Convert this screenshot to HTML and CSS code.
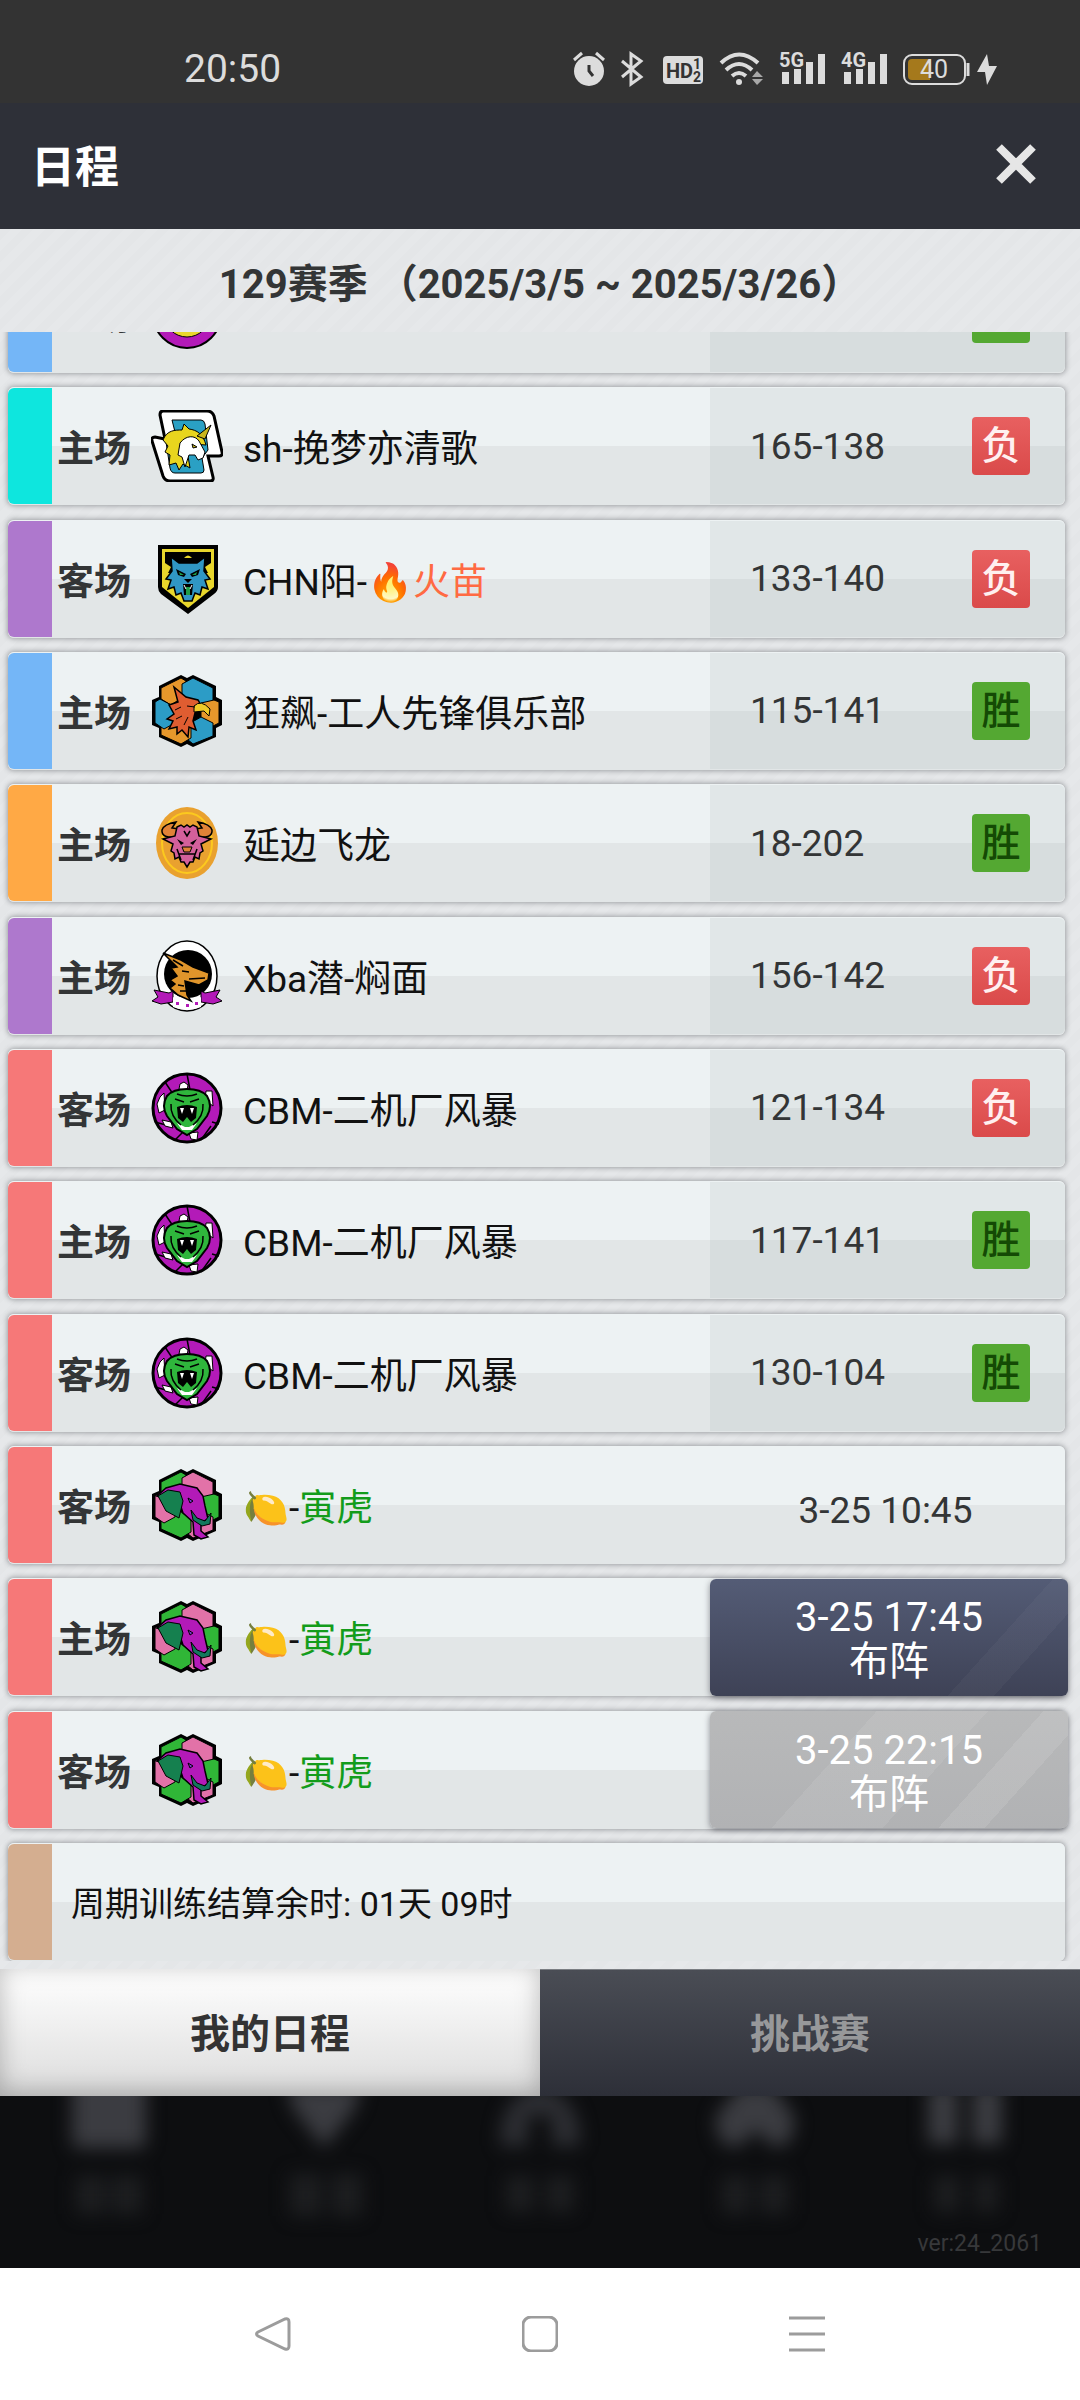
FILE: index.html
```html
<!DOCTYPE html>
<html lang="zh-CN">
<head>
  <meta charset="UTF-8">
  <meta name="viewport" content="width=device-width, initial-scale=1.0">
  <title>日程</title>
  <link rel="stylesheet" href="styles.css">
</head>
<body>
  <!-- 队徽 -->
  <svg class="defs" aria-hidden="true">
    <symbol id="unicorn" viewBox="0 0 72 72">
      <path d="M12 1H56Q61 1 63 6L71 42Q72 46 68 46L57 46L62 67Q63 71 59 71H19Q14 71 12 66L1 31Q0 27 4 27L14 29L9 5Q9 1 12 1Z" fill="#fff" stroke="#000" stroke-width="3"/>
      <path d="M21 10H50Q53 10 54 14L57 40L51 48L53 60Q53 63 50 63H24Q20 63 19 58L15 32L25 26Z" fill="#2aa0c4" stroke="#000"/>
      <path d="M12 30C16 20 24 20 31 20L33 14L38 19C46 20 52 24 55 35L42 34L37 46L39 58L32 54L28 60L25 53L18 55L19 45L14 42L17 36Z" fill="#e8d51e" stroke="#000"/>
      <path d="M29 33C35 25 44 25 48 31L54 42L52 48L47 50L44 45L38 45L34 57L31 47L27 45Z" fill="#fff" stroke="#000"/>
      <path d="M46 26L60 15L54 29ZM41 34L46 37L42 38Z" fill="#c9b61c" stroke="#000"/>
    </symbol>
    <symbol id="wolf" viewBox="0 0 72 72">
      <path d="M7 2H67V44Q67 48 63 51L37 71L10 51Q7 48 7 44Z"/>
      <path d="M11 6H63V44L37 65L11 44Z" fill="#e8d62c"/>
      <path d="M14 9H60V20L54 24L57 30H17L20 24L14 20Z"/>
      <path d="M33 15Q37 10 41 15Z" fill="#e8d62c"/>
      <path d="M20 14L28 20H46L54 14L53 28L59 36L54 37L57 46L51 44L49 52L44 50L41 58H33L30 50L25 52L23 44L17 46L20 37L15 36L21 28Z" fill="#3096c4" stroke="#000" stroke-width="1.5"/>
      <path d="M25 26L35 31L33 34L27 32ZM49 26L39 31L41 34L47 32ZM33 36H41L37 40ZM32 41H42L41 52H33Z"/>
      <path d="M28 29L33 32H29ZM46 29L41 32H45ZM35 44H39V52H35Z" fill="#1f9d48"/>
      <path d="M33 42L35 46M41 42L39 46" stroke="#fff"/>
    </symbol>
    <symbol id="hex" viewBox="0 0 72 72">
      <path d="M30 0L36 3L42 0L65 11V22L71 25V50L65 53V62L42 72L36 69L30 72L8 62V53L1 50V25L8 22V11Z"/>
      <g stroke="#000">
        <path d="M30 3L35 6V20L20 30L10 24V13Z" fill="var(--cell-a)"/>
        <path d="M42 3L62 13V26L50 34L31 20V9Z" fill="var(--cell-b)"/>
        <path d="M63 25L68 27V48L60 52L50 44V28Z" fill="var(--cell-a)"/>
        <path d="M62 61L42 69L36 64V50L50 42L62 48Z" fill="var(--cell-b)"/>
        <path d="M30 69L10 60V52L26 40L40 50V63Z" fill="var(--cell-a)"/>
        <path d="M4 27L9 24L24 32V48L13 54L4 48Z" fill="var(--cell-b)"/>
      </g>
    </symbol>
    <symbol id="eagle" viewBox="0 0 72 72">
      <use href="#hex"/>
      <path d="M23 12L35 22L47 25L51 32L44 38L42 46L45 55L38 52L37 62L31 55L26 59V52L18 54L22 46L16 44L23 39L18 30L27 27Z" fill="#df5d31" stroke="#000" stroke-width="1.5"/>
      <path d="M43 31Q50 24 59 34L58 41L53 36L43 37Z" fill="#f0cb28" stroke="#000"/>
      <path d="M24 35L30 32M25 44L31 41M33 50L37 42M36 31L44 32" stroke="#000" fill="none"/>
    </symbol>
    <symbol id="elephant" viewBox="0 0 72 72">
      <use href="#hex"/>
      <path d="M6 27L15 19L29 15L46 19L52 27L54 37L57 50L50 54V62L57 68L50 70L43 66L42 53L32 44L28 32Z" fill="#b31ab8" stroke="#000" stroke-width="1.5"/>
      <path d="M7 27L17 21L29 23L32 32L28 49L15 42Z" fill="#15804f" stroke="#000"/>
      <path d="M40 41L46 49L54 52L60 44L59 55L51 57L42 51Z" fill="#12785c" stroke="#000"/>
      <path d="M37 29L42 32L39 34Z" fill="#7a3ad0" stroke="#000"/>
    </symbol>
    <symbol id="bull" viewBox="0 0 72 72">
      <ellipse cx="36" cy="36" rx="31" ry="36" fill="#e9a12f"/>
      <ellipse cx="36" cy="36" rx="25" ry="30" fill="none" stroke="#fcc91e" stroke-width="2"/>
      <path d="M27 30Q10 32 11 23Q13 17 25 15L21 21L28 22ZM45 30Q62 32 61 23Q59 17 47 15L51 21L44 22Z" fill="#e08237" stroke="#000" stroke-width="1.5"/>
      <path d="M26 20L30 18L33 20L36 18L39 20L42 18L46 20L48 29L60 32L50 37L52 44L49 46L48 52L44 50L42 55L39 55L36 60L33 55L30 55L28 50L24 52L23 46L20 44L22 37L12 32L24 29Z" fill="#d3609b" stroke="#000" stroke-width="1.5"/>
      <path d="M26 32L33 36L30 38ZM46 32L39 36L42 38Z"/>
      <path d="M28 47H44M30 53L26 42M42 53L46 42M33 24L36 29L39 24" stroke="#000" stroke-width="1.5" fill="none"/>
      <path d="M31 40H41L39 45H33Z" fill="#e08237" stroke="#000"/>
    </symbol>
    <symbol id="dragon" viewBox="0 0 72 72">
      <ellipse cx="36" cy="36" rx="30" ry="35" fill="#fff" stroke="#000" stroke-width="1.5"/>
      <circle cx="37" cy="34" r="24"/>
      <path d="M1 61L7 57L3 50L18 53L22 51V62L10 64ZM71 61L65 57L69 50L54 53L50 51V62L62 64Z" fill="#b31ab8" stroke="#000"/>
      <path d="M22 57Q36 65 50 57V67Q36 73 22 67Z" fill="#fff"/>
      <path d="M12 13L30 20L42 27L58 33L57 40L48 45L34 41L36 55L40 61L27 55L19 48L24 44L19 40L26 36L20 28L26 27Z" fill="#e0952b" stroke="#000" stroke-width="1.5"/>
      <path d="M31 31L38 32M38 39L54 38M27 45L33 46M29 51L35 51M22 20L32 26" stroke="#000" stroke-width="1.5"/>
      <path d="M25 62h3v3h-3zM35 64h3v3h-3zM44 62h3v3h-3z" fill="#b31ab8"/>
    </symbol>
    <symbol id="cobra" viewBox="0 0 72 72">
      <circle cx="36" cy="36" r="34" fill="#b31ab8" stroke="#000" stroke-width="3"/>
      <path d="M14 10L22 22M36 2L39 18M4 50L22 55M50 68L60 54M24 68L32 60M61 50L68 52" stroke="#000" stroke-width="1.5"/>
      <path d="M28 17L29 12L33 10L37 13L36 19ZM55 19L61 19L62 34L54 28ZM13 21L9 25L6 32L8 41L14 38ZM11 48L20 50L22 56L14 54ZM38 61L47 60L46 68L40 67Z" fill="#fff" stroke="#000"/>
      <path d="M16 24Q22 17 36 17Q50 17 56 24Q62 34 56 44L46 57L36 63L26 57L16 44Q10 34 16 24Z" fill="#2fb63c" stroke="#000" stroke-width="2"/>
      <path d="M26 35Q36 31 46 35L45 46L40 50L36 45L32 50L27 46Z"/>
      <path d="M29 36L31 42L33 36M39 36L41 42L43 36M26 51L34 55H38L46 51L41 58H31Z" fill="#fff"/>
      <path d="M24 27L33 30M48 27L39 30M20 32Q19 44 30 53M52 32Q53 44 42 53M26 22Q36 26 46 22" stroke="#000" stroke-width="1.5" fill="none"/>
    </symbol>
    <symbol id="disc" viewBox="0 0 72 72">
      <circle cx="36" cy="36" r="34" fill="#b31ab8" stroke="#000" stroke-width="2"/>
      <circle cx="36" cy="36" r="23" fill="#e8d62c" stroke="#000"/>
    </symbol>
  </svg>

  <div class="status">
    <span class="time">20:50</span>
    <div class="status-icons">
      <svg width="32" height="36" viewBox="0 0 32 36">
        <path d="M1 9L9 2M31 9L23 2" stroke="#dcdcdc" stroke-width="3"/>
        <circle cx="16" cy="20" r="15" fill="#dcdcdc"/>
        <path d="M16 14V20L20 25" fill="none" stroke="#333" stroke-width="3"/>
      </svg>
      <svg width="26" height="36" viewBox="0 0 26 36">
        <path d="M1 10L20 26L10 33V3L20 10L1 26" fill="none" stroke="#dcdcdc" stroke-width="3"/>
      </svg>
      <svg width="40" height="36" viewBox="0 0 40 36">
        <rect y="5" width="40" height="28" rx="4" fill="#dcdcdc"/>
        <text x="3" y="27" class="hd">HD</text>
        <text x="30" y="18" class="hd-num">1</text>
        <text x="30" y="31" class="hd-num">2</text>
      </svg>
      <svg width="44" height="36" viewBox="0 0 44 36">
        <path d="M2 12Q20 -5 39 12M7 19Q20 7 33 19M13 25Q20 19 27 25" fill="none" stroke="#dcdcdc" stroke-width="4"/>
        <circle cx="20" cy="31" r="3" fill="#dcdcdc"/>
        <path d="M33 26L38 20L44 26ZM33 28L38 34L44 28Z" fill="#a8a8a8"/>
      </svg>
      <svg width="46" height="36" viewBox="0 0 46 36">
        <text x="0" y="16" class="net">5G</text>
        <path d="M3 21h7v12H3zM15 18h7v15h-7zM27 11h7v22h-7zM39 3h7v30h-7z" fill="#dcdcdc"/>
      </svg>
      <svg width="46" height="36" viewBox="0 0 46 36">
        <text x="0" y="16" class="net">4G</text>
        <path d="M3 21h7v12H3zM15 18h7v15h-7zM27 11h7v22h-7zM39 3h7v30h-7z" fill="#dcdcdc"/>
      </svg>
      <svg width="94" height="36" viewBox="0 0 94 36">
        <rect x="1" y="4" width="61" height="29" rx="8" fill="none" stroke="#dcdcdc" stroke-width="2"/>
        <path d="M9 8H27V29H9Q5 29 5 25V12Q5 8 9 8Z" fill="#a5791c"/>
        <path d="M65 12V25" stroke="#dcdcdc" stroke-width="3"/>
        <text x="17" y="27" class="level">40</text>
        <path d="M84 3L74 21H82L84 34L94 15H86Z" fill="#dcdcdc"/>
      </svg>
    </div>
  </div>

  <header>
    <h1>日程</h1>
    <button class="close" aria-label="关闭">
      <svg width="42" height="42" viewBox="0 0 42 42"><path d="M4 4L38 38M38 4L4 38" stroke="#e6e6e6" stroke-width="8"/></svg>
    </button>
  </header>

  <main>
    <h2>129赛季 （2025/3/5 ~ 2025/3/26）</h2>
    <div class="viewport">
      <ul class="matches" id="matches">
        <!-- 赛程由 JS 插入 -->
      </ul>
    </div>
  </main>

  <div class="tabs">
    <button class="tab active">我的日程</button>
    <button class="tab">挑战赛</button>
  </div>

  <footer>
    <div class="menu" aria-hidden="true">
      <svg viewBox="0 0 100 130"><rect x="14" y="-20" width="74" height="72" rx="6"/><path class="dim" d="M18 80h30v38H18zM54 80h30v38H54z"/></svg>
      <svg viewBox="0 0 100 130"><path d="M12 -10H88L80 14L50 52L20 14Z"/><path class="dim" d="M16 78h32v42H16zM58 78h30v42H58z"/></svg>
      <svg viewBox="0 0 100 130"><path d="M10 50Q8 0 50 -10Q92 0 90 50H62V20H38V50Z" opacity=".7"/><path class="dim" d="M16 80h28v36H16zM56 80h28v36H56z"/></svg>
      <svg viewBox="0 0 100 130"><path d="M34 -10H66L88 20Q90 54 66 50L50 34L34 50Q8 54 10 20Z"/><path class="dim" d="M16 80h28v38H16zM54 80h28v38H54z"/></svg>
      <svg viewBox="0 0 100 130"><path d="M6 -10H36V48H6ZM50 -10H80V48H50Z"/><path class="dim" d="M12 80h26v36H12zM52 80h24v36H52z"/></svg>
    </div>
    <span class="version">ver:24_2061</span>
  </footer>

  <nav>
    <button aria-label="返回"><svg width="36" height="36" viewBox="0 0 36 36"><path d="M3 16L30 3Q34 2 34 6V30Q34 34 30 33L3 20Q0 18 3 16Z"/></svg></button>
    <button aria-label="主页"><svg width="36" height="36" viewBox="0 0 36 36"><rect x="1" y="1" width="34" height="34" rx="8"/></svg></button>
    <button aria-label="菜单"><svg width="36" height="36" viewBox="0 0 36 36"><path d="M0 2H36M0 18H36M0 34H36"/></svg></button>
  </nav>

  <script>
    const matches = [
      {"color":"blue","side":"主场","logo":"disc","name":"","score":"","win":true},
      {"color":"cyan","side":"主场","logo":"unicorn","name":"sh-挽梦亦清歌","score":"165-138","win":false},
      {"color":"purple","side":"客场","logo":"wolf","name":"CHN阳-<span class='fire'>🔥火苗</span>","score":"133-140","win":false},
      {"color":"blue","side":"主场","logo":"eagle","name":"狂飙-工人先锋俱乐部","score":"115-141","win":true},
      {"color":"orange","side":"主场","logo":"bull","name":"延边飞龙","score":"18-202","win":true},
      {"color":"purple","side":"主场","logo":"dragon","name":"Xba潜-焖面","score":"156-142","win":false},
      {"color":"red","side":"客场","logo":"cobra","name":"CBM-二机厂风暴","score":"121-134","win":false},
      {"color":"red","side":"主场","logo":"cobra","name":"CBM-二机厂风暴","score":"117-141","win":true},
      {"color":"red","side":"客场","logo":"cobra","name":"CBM-二机厂风暴","score":"130-104","win":true},
      {"color":"red","side":"客场","logo":"elephant","name":"🍋-<span class='tiger'>寅虎</span>","date":"3-25 10:45"},
      {"color":"red","side":"主场","logo":"elephant","name":"🍋-<span class='tiger'>寅虎</span>","setup":"3-25 17:45","open":true},
      {"color":"red","side":"客场","logo":"elephant","name":"🍋-<span class='tiger'>寅虎</span>","setup":"3-25 22:15","open":false}
    ];

    function rightSide(m) {
      if (m.setup) {
        return `<button class="setup" ${m.open ? '' : 'disabled'}>${m.setup}<br>布阵</button>`;
      }
      if (m.date) {
        return `<div class="date">${m.date}</div>`;
      }
      return `
        <div class="result">
          <span class="score">${m.score}</span>
          <span class="badge ${m.win ? 'win' : 'lose'}">${m.win ? '胜' : '负'}</span>
        </div>`;
    }

    const list = document.getElementById('matches');

    matches.forEach(m => {
      const li = document.createElement('li');
      li.classList.add('match');
      li.innerHTML = `
        <span class="strip ${m.color}"></span>
        <span class="side">${m.side}</span>
        <svg class="logo ${m.logo}"><use href="#${m.logo}"/></svg>
        <span class="name">${m.name}</span>
        ${rightSide(m)}
      `;
      list.appendChild(li);
    });

    const training = document.createElement('li');
    training.classList.add('match');
    training.innerHTML = '<span class="strip tan"></span><span class="training">周期训练结算余时: 01天 09时</span>';
    list.appendChild(training);
  </script>
</body>
</html>
```

FILE: styles.css
```css
:root {
  --dark: #2e3038;
  --text: #333536;
  --icon: #dcdcdc;
}

* {
  box-sizing: border-box;
  margin: 0;
  padding: 0;
}

body {
  display: flex;
  flex-direction: column;
  min-height: 100vh;
  font-family: Roboto, 'Noto Sans CJK SC', sans-serif;
  font-size: 37px;
  color: var(--text);
  background-color: white;
}

button {
  font: inherit;
  border: none;
  background: none;
  cursor: pointer;
}

.defs {
  position: absolute;
  width: 0;
  height: 0;
}

.status {
  display: flex;
  justify-content: space-between;
  align-items: center;
  height: 103px;
  padding: 34px 83px 0 184px;
  background-color: #333;
  color: var(--icon);
}

.time {
  font-size: 39px;
}

.status-icons {
  display: flex;
  gap: 16px;
}

.hd {
  font-size: 20px;
  font-weight: bold;
  fill: #333;
}

.hd-num {
  font-size: 14px;
  font-weight: bold;
  fill: #333;
}

.net {
  font-size: 20px;
  font-weight: bold;
  fill: var(--icon);
}

.level {
  font-size: 25px;
  fill: var(--icon);
}

header {
  display: flex;
  justify-content: space-between;
  align-items: center;
  height: 126px;
  padding: 0 43px 4px 31px;
  background-color: var(--dark);
  color: white;
}

h1 {
  font-size: 44px;
}

.close {
  display: flex;
}

main {
  flex: 1;
  display: flex;
  flex-direction: column;
  padding-bottom: 8px;
  background: repeating-linear-gradient(135deg, #e4e6e8 0 8px, #e6e8ea 8px 16px);
}

h2 {
  height: 103px;
  line-height: 112px;
  text-align: center;
  font-size: 40px;
  white-space: pre;
}

.viewport {
  flex: 1;
  display: flex;
  overflow: hidden;
}

/* 列表已向下滚动一点 */
.matches {
  flex: 1;
  display: flex;
  flex-direction: column;
  justify-content: space-between;
  gap: 14px;
  margin-top: -77px;
  padding: 0 15px 0 8px;
  list-style: none;
}

.match {
  display: flex;
  align-items: center;
  height: 118px;
  border-radius: 6px;
  background: linear-gradient(#edf2f3 50%, #e2e6e7 50%);
  box-shadow: 0 0 5px 1px rgba(70, 75, 80, 0.45);
}

.strip {
  width: 44px;
  height: 116px;
  border-radius: 6px 0 0 6px;
}

.blue { background-color: #74b6f7; }
.cyan { background-color: #0ee6de; }
.purple { background-color: #ae78cd; }
.orange { background-color: #ffa945; }
.red { background-color: #f67878; }
.tan { background-color: #d4ae90; }

.side {
  margin-left: 5px;
  font-weight: bold;
}

.logo {
  width: 72px;
  height: 72px;
  margin: 0 20px;
}

.eagle {
  --cell-a: #e6972b;
  --cell-b: #2c9cc6;
}

.elephant {
  --cell-a: #30b637;
  --cell-b: #e272a8;
}

.name {
  flex: 1;
  color: #111;
}

.fire {
  color: #ff6a42;
}

.tiger {
  color: #139c1b;
}

.result {
  display: flex;
  justify-content: space-between;
  align-items: center;
  width: 355px;
  height: 116px;
  padding: 0 35px 0 40px;
  border-radius: 0 6px 6px 0;
  background-color: rgba(150, 160, 160, 0.13);
}

.badge {
  width: 58px;
  height: 58px;
  margin-left: auto;
  border-radius: 4px;
  line-height: 58px;
  text-align: center;
  font-size: 39px;
  font-weight: 500;
}

.win {
  background-color: #54a832;
  color: #144a05;
}

.lose {
  background: linear-gradient(#e86060, #da4a4a);
  color: #fff0f0;
}

.date {
  width: 355px;
  padding: 12px 4px 0 0;
  text-align: center;
}

.setup {
  width: 358px;
  height: 117px;
  margin-right: -3px;
  padding-top: 6px;
  border-radius: 6px;
  font-size: 40px;
  line-height: 44px;
  color: white;
  background:
    linear-gradient(132deg, transparent 74%, rgba(255, 255, 255, 0.03) 74% 84%, transparent 84%),
    linear-gradient(#545c76, #3e4256);
  box-shadow: 0 2px 6px rgba(40, 40, 50, 0.5);
}

.setup:disabled {
  background:
    linear-gradient(132deg, transparent 36%, rgba(255, 255, 255, 0.08) 36% 60%, transparent 60% 72%, rgba(255, 255, 255, 0.1) 72% 82%, transparent 82%),
    linear-gradient(#b8b9ba, #b1b2b4);
}

.training {
  margin-left: 19px;
  font-size: 34px;
  color: #111;
}

.tabs {
  display: flex;
  height: 127px;
}

.tab {
  flex: 1;
  padding-bottom: 4px;
  font-size: 40px;
  font-weight: bold;
  color: #97989a;
  background: linear-gradient(#4a4d55, #2d2f38);
  border-top: 1px solid #7b7e83;
}

.tab.active {
  border: none;
  color: #333;
  background: linear-gradient(white, #dcdcdc);
  box-shadow: inset 0 -4px 24px rgba(0, 0, 0, 0.25);
}

footer {
  display: flex;
  flex-direction: column;
  height: 172px;
  background-color: #0d0e10;
  overflow: hidden;
}

.menu {
  display: grid;
  grid-template-columns: repeat(5, 1fr);
  justify-items: center;
  filter: blur(9px);
  fill: #3b3c41;
}

.menu svg {
  width: 100px;
  height: 130px;
  overflow: visible;
}

.dim {
  fill: #1d1e20;
}

.version {
  align-self: flex-end;
  margin-right: 38px;
  font-size: 23px;
  line-height: 36px;
  color: #37383a;
}

nav {
  display: grid;
  grid-template-columns: repeat(3, 36px);
  justify-content: center;
  gap: 231px;
  height: 132px;
}

nav svg {
  display: block;
  fill: none;
  stroke: #9c9c9c;
  stroke-width: 3;
}
```
